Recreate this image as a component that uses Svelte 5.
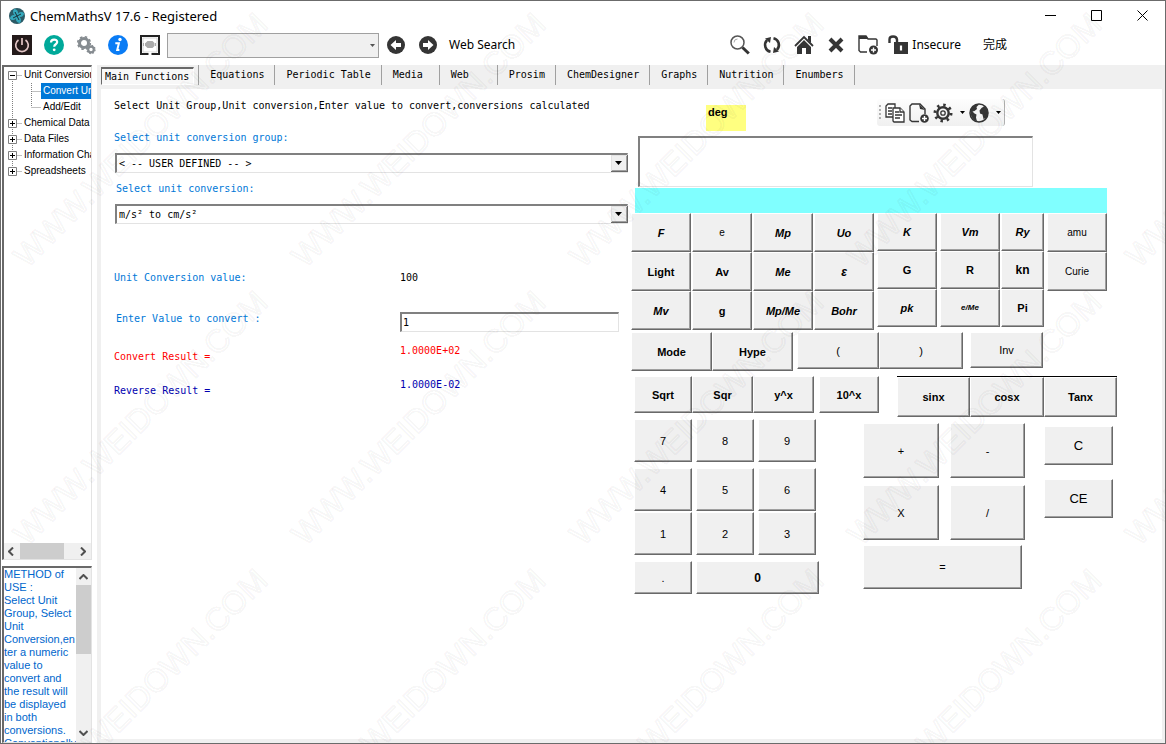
<script lang="ts">
  type Key = { t: string; c?: string };

  const tabs = [
    "Main Functions",
    "Equations",
    "Periodic Table",
    "Media",
    "Web",
    "Prosim",
    "ChemDesigner",
    "Graphs",
    "Nutrition",
    "Enumbers",
  ];
  let activeTab = $state(0);

  const tree = [
    { name: "Unit Conversions", children: ["Convert Units", "Add/Edit"] },
    { name: "Chemical Data", children: [] },
    { name: "Data Files", children: [] },
    { name: "Information Charts", children: [] },
    { name: "Spreadsheets", children: [] },
  ];
  let selected = $state("Convert Units");

  const help = `METHOD of
USE :
Select Unit
Group, Select
Unit
Conversion,en
ter a numeric
value to
convert and
the result will
be displayed
in both
conversions.
Conventionally`;

  // constants, grouped the way they sit on the keypad
  const constants: Key[][] = [
    [
      { t: "F", c: "b i" },
      { t: "e", c: "small" },
      { t: "Mp", c: "b i" },
      { t: "Uo", c: "b i" },
      { t: "Light", c: "b" },
      { t: "Av", c: "b" },
      { t: "Me", c: "b i" },
      { t: "ε", c: "b i big" },
      { t: "Mv", c: "b i" },
      { t: "g", c: "b" },
      { t: "Mp/Me", c: "b i" },
      { t: "Bohr", c: "b i" },
    ],
    [{ t: "K", c: "b i" }, { t: "G", c: "b" }, { t: "pk", c: "b i" }],
    [
      { t: "Vm", c: "b i" },
      { t: "Ry", c: "b i" },
      { t: "R", c: "b" },
      { t: "kn", c: "b big" },
      { t: "e/Me", c: "b i tiny" },
      { t: "Pi", c: "b" },
    ],
    [{ t: "amu", c: "small" }, { t: "Curie", c: "small" }],
  ];
  const digits = ["7", "8", "9", "4", "5", "6", "1", "2", "3", ".", "0"];
  const ops = ["+", "-", "X", "/", "="];

  let value = $state("1");
  let display = $state("");
  const factor = 100;

  function sci(n: number) {
    const [m, e] = n.toExponential(4).split("e");
    return m + "E" + e[0] + e.slice(1).padStart(2, "0");
  }
  function press(key: string) {
    if (key === "C" || key === "CE") display = "";
    else display += key;
  }

  const marks = [0, 1, 2].flatMap((r) =>
    [-1, 0, 1, 2, 3, 4].map((c) => ({ x: 26 + c * 278, y: 268 + r * 278 }))
  );
</script>

{#snippet key(k: Key)}
  <button class={`key ${k.c ?? ""}`} onclick={() => press(k.t)}>{k.t}</button>
{/snippet}

{#snippet arrow()}
  <svg class="arrow" width="17" height="17" viewBox="0 0 17 17" aria-hidden="true">
    <path d="M0 0h17v17H0z" fill="#696969" />
    <path d="M0 0h16v16H0z" fill="#e3e3e3" />
    <path d="M1 1h15v15H1z" fill="#a0a0a0" />
    <path d="M1 1h14v14H1z" fill="#f0f0f0" />
    <path d="M4 6h7L7.500 10z" fill="#000" />
  </svg>
{/snippet}

<div class="window">
  <header class="titlebar">
    <svg width="16" height="16" viewBox="0 0 16 16" aria-hidden="true">
      <circle cx="8" cy="8" r="8" fill="#2b5a66" />
      <path d="M8 8C4 7 3 4 5 1c4 0 5 4 3 7zM8 8c1-4 4-5 7-3 0 4-4 5-7 3zM8 8c4 1 5 4 3 7-4 0-5-4-3-7zM8 8c-1 4-4 5-7 3 0-4 4-5 7-3z" fill="#35a9bd" />
      <path d="M8 8 6 4M8 8l4-2M8 8l2 4M8 8l-4 2" stroke="#173038" />
    </svg>
    <h1>ChemMathsV 17.6 - Registered</h1>
    <div class="sysbuttons">
      <button aria-label="Minimize"><svg width="11" height="11"><path d="M0 5.500h11" /></svg></button>
      <button aria-label="Maximize"><svg width="11" height="11"><path d="M.5.5h10v10H.5z" /></svg></button>
      <button aria-label="Close"><svg width="11" height="11"><path d="m.5.5 10 10m0-10-10 10" /></svg></button>
    </div>
  </header>

  <div class="toolbar">
    <button aria-label="Exit">
      <svg width="20" height="20" viewBox="0 0 20 20">
        <path d="M0 0h20v20H0z" fill="#241a1a" />
        <path d="M6.500 5a6.300 6.300 0 1 0 7 0M10 3v7" fill="none" stroke="#e2c5c5" stroke-width="1.700" />
      </svg>
    </button>
    <button aria-label="Help">
      <svg width="20" height="20" viewBox="0 0 20 20">
        <circle cx="10" cy="10" r="10" fill="#00a99a" />
        <path d="M7 7.500c0-4 6.200-3.700 6.200-.4 0 2.300-3 2-3 4.600" fill="none" stroke="#fff" stroke-width="2.200" />
        <circle cx="10.200" cy="14.800" r="1.400" fill="#fff" />
      </svg>
    </button>
    <button aria-label="Settings">
      <svg width="20" height="20" viewBox="0 0 20 20" fill="none" stroke="#858b90">
        <circle cx="8" cy="8" r="4.500" stroke-width="3" />
        <circle cx="8" cy="8" r="6.300" stroke-width="1.600" stroke-dasharray="2.500 2.450" />
        <circle cx="15" cy="14.500" r="2.800" stroke-width="2.200" />
        <circle cx="15" cy="14.500" r="4" stroke-width="1.400" stroke-dasharray="1.600 1.540" />
      </svg>
    </button>
    <button aria-label="Information">
      <svg width="20" height="20" viewBox="0 0 20 20">
        <circle cx="10" cy="10" r="10" fill="#0a7cf5" />
        <circle cx="12" cy="4.500" r="1.700" fill="#fff" />
        <path d="M7.300 8.300h3.600l-1.700 6.800h2.200" fill="none" stroke="#fff" stroke-width="2" />
      </svg>
    </button>
    <button aria-label="Full screen">
      <svg width="20" height="20" viewBox="0 0 20 20">
        <path d="M1 1h18v18H1z" fill="#fff" stroke="#222" stroke-width="2" />
        <path d="M3 3h14v14H3z" fill="none" stroke="#ccc" stroke-width="0.800" />
        <path d="M7.500 6h5l2 2v3l-2 2h-5l-2-2V8z" fill="#aaa" />
        <path d="M3 9.500h14" stroke="#aaa" stroke-dasharray="1 1" stroke-width="3" />
        <path d="M8.500 18.500h3" stroke="#fff" stroke-width="3" />
      </svg>
    </button>
    <div class="address">
      <select aria-label="Address"><option></option></select>
      <svg width="5" height="3" aria-hidden="true"><path d="M0 0h5L2.500 3z" fill="#555" /></svg>
    </div>
    <button class="nav" aria-label="Back">
      <svg width="18" height="18" viewBox="0 0 18 18">
        <circle cx="9" cy="9" r="9" fill="#353535" />
        <path d="M3.500 9 9 4v3h5v4H9v3z" fill="#fff" />
      </svg>
    </button>
    <button class="nav" aria-label="Forward">
      <svg width="18" height="18" viewBox="0 0 18 18">
        <circle cx="9" cy="9" r="9" fill="#353535" />
        <path d="M14.500 9 9 4v3H4v4h5v3z" fill="#fff" />
      </svg>
    </button>
    <span>Web Search</span>
    <div class="browser">
      <button aria-label="Search">
        <svg width="20" height="20" viewBox="0 0 20 20" fill="none">
          <circle cx="7.500" cy="7.500" r="6.500" stroke="#555" stroke-width="1.500" />
          <path d="M4 7.500A3.500 3.500 0 0 1 7.500 4" stroke="#aaa" />
          <path d="m12.500 12.500 6.300 6" stroke="#333" stroke-width="3" />
        </svg>
      </button>
      <button aria-label="Refresh">
        <svg width="20" height="20" viewBox="0 0 20 20">
          <path d="M8.500 16.800A7 7 0 0 1 5 5.200M11.500 3.200A7 7 0 0 1 15 14.800" fill="none" stroke="#353535" stroke-width="2.600" />
          <path d="M3 3.500 9 2 8 8zM17 16.500 11 18l1-6z" fill="#353535" />
        </svg>
      </button>
      <button aria-label="Home">
        <svg width="20" height="20" viewBox="0 0 20 20">
          <path d="m1 11 9-9 9 9" fill="none" stroke="#353535" stroke-width="1.800" />
          <path d="M14 1h3v7l-3-3zM10 5l7 7v7h-5v-6H8v6H3v-7z" fill="#353535" />
        </svg>
      </button>
      <button aria-label="Stop">
        <svg width="20" height="20" viewBox="0 0 20 20">
          <path d="m4 4 12 12M16 4 4 16" stroke="#353535" stroke-width="4" />
        </svg>
      </button>
      <button aria-label="Add favourite">
        <svg width="20" height="20" viewBox="0 0 20 20">
          <path d="M9 17H2.500L1 15.500V1h7l2 3h8l1 1v6" fill="none" stroke="#353535" stroke-width="1.400" />
          <path d="M1 1h7l2 3H1z" fill="#353535" />
          <circle cx="15.500" cy="15" r="4.500" fill="#353535" />
          <path d="M15.500 12.500v5M13 15h5" stroke="#fff" stroke-width="1.400" />
        </svg>
      </button>
      <button class="lock">
        <svg width="20" height="20" viewBox="0 0 20 20">
          <path d="M1.500 8V4.500c0-4 7-4 7.500 0V8" fill="none" stroke="#353535" stroke-width="2.400" />
          <path d="M6 7h14v12H6z" fill="#353535" />
          <path d="M13 10.500v5" stroke="#fff" stroke-width="2.200" />
        </svg>
        Insecure
      </button>
      <span>完成</span>
    </div>
  </div>

  <div class="body">
    <aside>
      <nav class="tree">
        <svg class="lines" width="40" height="120" aria-hidden="true">
          <path d="M8.500 8v96M8.500 8.500h10M8.500 56.500h10M8.500 72.500h10M8.500 88.500h10M8.500 104.500h10M27.500 16v24M27.500 24.500h9M27.500 40.500h9" />
        </svg>
        <ul>
          {#each tree as node}
            <li>
              <button class="node" onclick={() => (selected = node.name)}>
                <svg width="9" height="9" aria-hidden="true">
                  <path d="M.5.5h8v8h-8z" fill="#fff" stroke="#808080" />
                  <path d={node.children.length ? "M2 4.500h5" : "M2 4.500h5M4.500 2v5"} stroke="#000" />
                </svg>
                {node.name}
              </button>
              {#if node.children.length}
                <ul>
                  {#each node.children as child}
                    <li>
                      <button class="leaf" class:selected={selected === child} onclick={() => (selected = child)}>{child}</button>
                    </li>
                  {/each}
                </ul>
              {/if}
            </li>
          {/each}
        </ul>
        <div class="hscroll">
          <svg width="6" height="9"><path d="M5 .5 1 4.500l4 4" /></svg>
          <div class="thumb"></div>
          <svg width="6" height="9"><path d="m1 .5 4 4-4 4" /></svg>
        </div>
      </nav>
      <div class="method">
        <p>{help}</p>
        <div class="vscroll">
          <svg width="9" height="6"><path d="m.5 5 4-4 4 4" /></svg>
          <div class="thumb"></div>
          <svg width="9" height="6"><path d="m.5 1 4 4 4-4" /></svg>
        </div>
      </div>
    </aside>

    <section class="panel">
      <nav class="tabs">
        {#each tabs as tab, i}
          <button class:active={activeTab === i} onclick={() => (activeTab = i)}><span>{tab}</span></button>
        {/each}
      </nav>

      <main>
        <form onsubmit={(e) => e.preventDefault()}>
          <p>Select Unit Group,Unit conversion,Enter value to convert,conversions calculated</p>
          <label for="group">Select unit conversion group:</label>
          <div class="combo">
            <select id="group"><option>&lt; -- USER DEFINED -- &gt;</option></select>
            {@render arrow()}
          </div>
          <label for="unit">Select unit conversion:</label>
          <div class="combo">
            <select id="unit"><option>m/s² to cm/s²</option></select>
            {@render arrow()}
          </div>
          <div class="results">
            <span class="blue">Unit Conversion value:</span>
            <output>{factor}</output>
            <label for="value">Enter Value to convert :</label>
            <input id="value" bind:value />
            <span class="red low">Convert Result =</span>
            <output class="red">{sci(Number(value) * factor)}</output>
            <span class="navy low">Reverse Result =</span>
            <output class="navy">{sci(Number(value) / factor)}</output>
          </div>
        </form>

        <section class="calc">
          <div class="calc-top">
            <span class="deg">deg</span>
            <div class="calc-tools">
              <svg width="2" height="16" aria-hidden="true"><path d="M1 0v16" stroke="#b0b0b0" stroke-width="2" stroke-dasharray="2 2" /></svg>
              <button aria-label="Copy">
                <svg width="20" height="20" viewBox="0 0 20 20" fill="#fff" stroke="#353535" stroke-width="1.300">
                  <path d="M7 14H1V3l2-2h7v13z" />
                  <path d="M3 5h4M3 8h4M3 11h4" />
                  <path d="M8 5h7l4 4v10H9l-1-1z" />
                  <path d="M15 5v4h4M10 9h4M10 12h7M10 15h5" />
                </svg>
              </button>
              <button aria-label="New">
                <svg width="20" height="20" viewBox="0 0 20 20">
                  <path d="M10 18.500H3L1 17V3l2-2h8l5 5v5" fill="none" stroke="#353535" stroke-width="1.400" />
                  <path d="m10 1 6 6-5-1z" fill="#353535" />
                  <circle cx="15.500" cy="15.500" r="4.300" fill="#353535" />
                  <path d="M15.500 13v5M13 15.500h5" stroke="#fff" stroke-width="1.400" />
                </svg>
              </button>
              <button aria-label="Options">
                <svg width="20" height="20" viewBox="0 0 20 20" fill="none" stroke="#353535">
                  <circle cx="10" cy="10" r="5.700" stroke-width="2.400" />
                  <circle cx="10" cy="10" r="8" stroke-width="3" stroke-dasharray="2.400 3.880" />
                  <circle cx="10" cy="10" r="2.200" stroke-width="1.300" />
                </svg>
                <svg width="5" height="3"><path d="M0 0h5L2.500 3z" /></svg>
              </button>
              <button aria-label="Web">
                <svg width="20" height="20" viewBox="0 0 20 20">
                  <circle cx="10" cy="10" r="9" fill="#f4f4f4" stroke="#353535" stroke-width="1.500" />
                  <path d="M1.500 8C2 4 6 1 10 1.500L7.500 4 8 6 5.500 8l-2 .5 2 2 2 1-.5 3 1 4C4 17 1 13 1.500 8zM12.500 5l3-2c4 3 4.500 8 2 12l-3 1-1-4.500-2.500-1-.5-3z" fill="#353535" />
                </svg>
                <svg width="5" height="3"><path d="M0 0h5L2.500 3z" /></svg>
              </button>
            </div>
          </div>

          <input class="display" aria-label="Display" bind:value={display} />
          <div class="strip"></div>

          <div class="constants">
            {#each constants as group, i}
              <div class={`group g${i}`}>
                {#each group as k}{@render key(k)}{/each}
              </div>
            {/each}
          </div>

          <div class="modes">
            <div class="pair bold">
              {@render key({ t: "Mode", c: "b" })}
              {@render key({ t: "Hype", c: "b" })}
            </div>
            <div class="pair">
              {@render key({ t: "(" })}
              {@render key({ t: ")" })}
            </div>
            {@render key({ t: "Inv", c: "inv" })}
          </div>

          <div class="functions">
            <div class="powers">
              {#each ["Sqrt", "Sqr", "y^x"] as t}{@render key({ t, c: "b" })}{/each}
            </div>
            {@render key({ t: "10^x", c: "b" })}
            <div class="trig">
              {#each ["sinx", "cosx", "Tanx"] as t}{@render key({ t, c: "b" })}{/each}
            </div>
          </div>

          <div class="pad">
            <div class="digits">
              {#each digits as t}{@render key({ t, c: t === "0" ? "b big zero" : t === "." ? "dot" : "" })}{/each}
            </div>
            <div class="ops">
              {#each ops as t}{@render key({ t, c: t === "=" ? "equals" : "" })}{/each}
            </div>
            <div class="clear">
              {@render key({ t: "C" })}
              {@render key({ t: "CE" })}
            </div>
          </div>
        </section>
      </main>
    </section>
  </div>

  <svg class="watermark" aria-hidden="true">
    {#each marks as m}
      <text transform={`translate(${m.x} ${m.y}) rotate(-45)`}>WWW.WEIDOWN.COM</text>
    {/each}
  </svg>
</div>

<style>
  :global(body) {
    background: #fff;
  }
  * {
    box-sizing: border-box;
  }
  button,
  input,
  select {
    margin: 0;
    padding: 0;
    border: 0;
    border-radius: 0;
    background: none;
    color: inherit;
    font: inherit;
  }
  svg {
    display: block;
    flex: none;
  }
  ul {
    margin: 0;
    padding: 0;
    list-style: none;
  }
  p {
    margin: 0;
  }
  .window {
    position: relative;
    display: flex;
    flex-direction: column;
    min-height: 100vh;
    border: 1px solid #6b6b6b;
    overflow: hidden;
    color: #000;
    font: 12px/16px "Noto Sans", "Noto Sans CJK SC", sans-serif;
  }

  .titlebar {
    display: flex;
    align-items: center;
    gap: 5px;
    height: 29px;
    padding-left: 8px;
  }
  h1 {
    flex: 1;
    margin: 0;
    font-size: 13px;
    font-weight: 400;
  }
  .sysbuttons {
    display: flex;
  }
  .sysbuttons button {
    display: grid;
    place-items: center;
    width: 46px;
    height: 29px;
  }
  .sysbuttons path {
    fill: none;
    stroke: #000;
  }

  .toolbar {
    display: flex;
    align-items: center;
    gap: 12px;
    height: 35px;
    padding-left: 11px;
    padding-bottom: 5px;
  }
  .address {
    display: grid;
    width: 212px;
    margin: 0 -4px 0 -5px;
  }
  .address select {
    grid-area: 1 / 1;
    height: 25px;
    border: 1px solid #a0a0a0;
    background: #f0f0f0;
    appearance: none;
  }
  .address svg {
    grid-area: 1 / 1;
    place-self: center end;
    margin-right: 4px;
    pointer-events: none;
  }
  .nav + .nav {
    margin-left: 2px;
  }
  .toolbar span {
    white-space: nowrap;
  }
  .browser {
    display: flex;
    align-items: center;
    gap: 12px;
    margin: 0 158px 0 auto;
  }
  .lock {
    display: flex;
    align-items: center;
    gap: 4px;
    margin: 0 10px 0 -2px;
  }

  .body {
    display: flex;
    flex: 1;
  }
  aside {
    display: flex;
    flex: none;
    flex-direction: column;
    gap: 6px;
    width: 91px;
    font: 11px/16px "Liberation Sans", Arial, sans-serif;
  }
  .tree,
  .method {
    position: relative;
    margin-left: 1px;
    border: 1px solid #e3e3e3;
    border-top: 2px solid #696969;
    border-left: 2px solid #696969;
    overflow: hidden;
  }
  .tree {
    display: flex;
    flex: 1;
    flex-direction: column;
    justify-content: space-between;
    font-size: 10px;
  }
  .tree li {
    white-space: nowrap;
  }
  .lines {
    position: absolute;
    top: 0;
    left: 0;
    fill: none;
    stroke: #808080;
    stroke-dasharray: 1 1;
  }
  .node {
    position: relative;
    display: flex;
    align-items: center;
    gap: 7px;
    height: 16px;
    padding-left: 4px;
  }
  .leaf {
    position: relative;
    display: block;
    height: 16px;
    margin-left: 37px;
    padding: 0 2px;
  }
  .leaf.selected {
    background: #0078d7;
    color: #fff;
  }
  .hscroll,
  .vscroll {
    display: flex;
    align-items: center;
    justify-content: space-between;
    background: #f0f0f0;
  }
  .hscroll {
    height: 16px;
    padding: 0 5px 0 4px;
  }
  .hscroll .thumb {
    width: 44px;
    height: 16px;
    margin-right: 11px;
    background: #cdcdcd;
  }
  .hscroll path,
  .vscroll path {
    fill: none;
    stroke: #505050;
    stroke-width: 2;
  }
  .method {
    display: flex;
    height: 177px;
    color: #0066cc;
  }
  .method p {
    flex: 1;
    height: 174px;
    overflow: hidden;
    line-height: 13px;
    white-space: pre;
  }
  .vscroll {
    flex: none;
    flex-direction: column;
    width: 15px;
    padding: 6px 0;
  }
  .vscroll .thumb {
    width: 15px;
    height: 69px;
    margin-bottom: 71px;
    background: #cdcdcd;
  }

  .panel {
    display: flex;
    flex: 1;
    flex-direction: column;
    min-width: 0;
    margin-left: 5px;
    font: 10px/14px "DejaVu Sans Mono", monospace;
  }
  .tabs {
    display: flex;
    align-items: flex-start;
    height: 24px;
    padding-left: 4px;
    background: #f0f0f0;
  }
  .tabs button {
    min-width: 58px;
    height: 20px;
    padding: 0 10px 0 11px;
    border-right: 1px solid #a0a0a0;
    text-align: left;
    white-space: nowrap;
  }
  .tabs .active {
    padding: 1px 4px 0 0;
  }
  .tabs .active span {
    display: block;
    height: 18px;
    padding: 1px 4px 0 3px;
    border: 1px solid #fff;
    border-top: 2px solid #696969;
    border-left: 1px solid #696969;
    background: #f8f8f8;
  }
  main {
    display: flex;
    flex: 1;
    border: 4px solid #f0f0f0;
    border-top: 0;
    border-right-width: 3px;
  }

  form {
    flex: 1;
    padding: 10px 3px 0 13px;
  }
  form label,
  .blue {
    color: #0078d7;
  }
  form > p,
  form > label {
    display: block;
    white-space: nowrap;
  }
  form > label {
    margin-top: 18px;
  }
  form > .combo + label {
    margin: 9px 0 7px 2px;
  }
  .combo {
    display: grid;
    align-items: center;
    margin-left: 1px;
  }
  form > label + .combo {
    margin-top: 8px;
  }
  .combo select {
    grid-area: 1 / 1;
    height: 20px;
    padding-left: 2px;
    border: 1px solid #e3e3e3;
    border-top: 2px solid #808080;
    border-left: 2px solid #808080;
    background: #fff;
    appearance: none;
  }
  .arrow {
    grid-area: 1 / 1;
    justify-self: end;
    pointer-events: none;
  }
  .results {
    display: grid;
    grid-template-columns: 286px 1fr;
    row-gap: 14px;
    margin: 47px 9px 0 0;
  }
  .results input {
    height: 20px;
    margin: 13px 0 2px;
    padding-left: 1px;
    border: 1px solid #e3e3e3;
    border-top: 2px solid #808080;
    border-left: 2px solid #808080;
  }
  .results label {
    margin: 13px 0 0 2px;
  }
  .results output.red {
    margin-top: -4px;
  }
  .low {
    padding-top: 2px;
  }
  .navy.low {
    padding-top: 6px;
  }
  .red {
    color: #f00;
  }
  .navy {
    color: #0000b0;
  }

  .calc {
    flex: none;
    width: 531px;
    padding-top: 10px;
    font: 11px/14px "Liberation Sans", Arial, sans-serif;
  }
  .calc-top {
    display: flex;
    align-items: flex-start;
    gap: 131px;
    height: 37px;
    padding-left: 75px;
  }
  .deg {
    width: 40px;
    height: 26px;
    margin-top: 6px;
    padding-left: 2px;
    background: #ffff80;
    font-weight: 700;
  }
  .calc-tools {
    display: flex;
    align-items: center;
    gap: 4px;
    width: 128px;
    height: 27px;
    padding-left: 2px;
    border-right: 1px solid #b0b0b0;
    border-radius: 3px;
    background: linear-gradient(#fdfdfd, #f0f0f0);
  }
  .calc-tools button {
    display: flex;
    align-items: center;
    gap: 7px;
  }
  .display {
    display: block;
    width: 395px;
    height: 51px;
    margin-left: 7px;
    border: 1px solid #e3e3e3;
    border-top: 2px solid #808080;
    border-left: 2px solid #808080;
    font-size: 16px;
  }
  .strip {
    width: 472px;
    height: 25px;
    margin: 1px 0 0 4px;
    background: #80ffff;
  }

  .key {
    border: 1px solid #696969;
    border-top-color: #fff;
    border-left-color: #fff;
    background: #f0f0f0;
    box-shadow: inset -1px -1px #a0a0a0;
  }
  .b {
    font-weight: 700;
  }
  .i {
    font-style: italic;
  }
  .small {
    font-size: 10px;
  }
  .tiny {
    font-size: 8px;
  }
  .big {
    font-size: 12px;
  }
  .constants {
    display: flex;
    align-items: flex-start;
    gap: 3px;
  }
  .group {
    display: grid;
    grid-template-columns: 60px;
    grid-auto-rows: 38px;
    column-gap: 1px;
  }
  .g0,
  .g3 {
    grid-auto-rows: 39px;
  }
  .g0 {
    grid-template-columns: repeat(4, 60px);
  }
  .g2 {
    grid-template-columns: 60px 43px;
  }
  .modes {
    display: flex;
    align-items: flex-start;
    gap: 4px;
    padding-top: 2px;
  }
  .pair {
    display: grid;
    grid-template-columns: 82px 84px;
    height: 37px;
  }
  .bold {
    grid-template-columns: 81px 81px;
    height: 39px;
  }
  .inv {
    width: 73px;
    height: 36px;
    margin-left: 3px;
  }
  .functions {
    display: grid;
    grid-template-columns: 180px 60px 233px;
    column-gap: 5px;
    align-items: start;
    padding: 5px 0 0 3px;
  }
  .functions .key {
    height: 37px;
  }
  .powers {
    display: grid;
    grid-template-columns: 58px 61px 61px;
  }
  .trig {
    display: grid;
    grid-template-columns: 73px 74px 73px;
    margin-left: 13px;
    border-top: 1px solid #000;
  }
  .functions .trig .key {
    height: 40px;
  }
  .pad {
    display: flex;
    align-items: flex-start;
    padding: 2px 0 0 3px;
  }
  .digits,
  .ops {
    display: grid;
    align-items: start;
  }
  .digits {
    grid-template-columns: repeat(3, 58px);
    grid-template-rows: 49px 44px 49px 33px;
    column-gap: 4px;
  }
  .digits .key {
    height: 43px;
  }
  .digits .dot,
  .digits .zero {
    height: 33px;
  }
  .digits .zero {
    grid-column: span 2;
    width: 123px;
  }
  .ops {
    grid-template-columns: 76px 75px;
    grid-template-rows: 62px 60px 44px;
    column-gap: 11px;
    margin: 4px 19px 0 47px;
  }
  .ops .key {
    height: 55px;
  }
  .ops .equals {
    grid-column: span 2;
    width: 159px;
    height: 44px;
  }
  .clear {
    display: grid;
    grid-template-columns: 69px;
    grid-auto-rows: 39px;
    row-gap: 14px;
    margin-top: 7px;
    font-size: 13px;
  }

  .watermark {
    position: absolute;
    inset: 0;
    width: 100%;
    height: 100%;
    pointer-events: none;
    fill: none;
    stroke: #000;
    stroke-opacity: 0.04;
    stroke-width: 2;
    stroke-linejoin: round;
    font: 32px "Liberation Sans", Arial, sans-serif;
  }
</style>
